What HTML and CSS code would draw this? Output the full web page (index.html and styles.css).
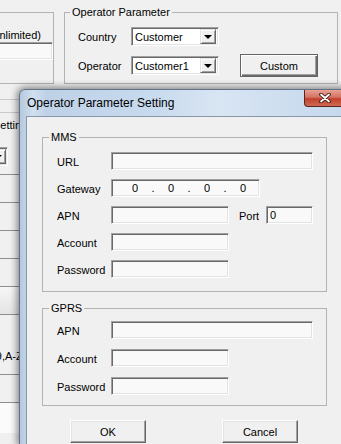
FILE: index.html
```html
<!DOCTYPE html>
<html lang="en">
<head>
  <meta charset="UTF-8" />
  <title>Operator Parameter Setting</title>
  <link rel="stylesheet" href="styles.css">
</head>
<body>

  <div class="app">
    <div class="top">
      <div class="group left-group">
        <div class="unl">(Unlimited)</div>
        <div class="field stub"></div>
      </div>

      <fieldset class="group op-group">
        <legend>Operator Parameter</legend>
        <div class="op-grid">
          <span class="lbl">Country</span>
          <div class="combo"><span>Customer</span><i class="drop"></i></div>
          <span class="lbl">Operator</span>
          <div class="combo"><span>Customer1</span><i class="drop"></i></div>
          <button class="btn custom">Custom</button>
        </div>
      </fieldset>
    </div>

    <div class="list">
      <div class="row r-head"></div>
      <div class="row r-thin"></div>
      <div class="row r-cap"><span class="cut-setting">Setting</span></div>
      <div class="row r-combo"><div class="combo mini"><i class="drop"></i></div></div>
      <div class="row r-std"></div>
      <div class="row r-std"></div>
      <div class="row r-std"></div>
      <div class="row r-std"></div>
      <div class="row r-std light"></div>
      <div class="row r-tall"><span class="cut-chars">0-9,A-Z</span></div>
      <div class="row r-std"></div>
      <div class="row r-last white"></div>
    </div>
  </div>

  <div class="dialog">
    <div class="titlebar">
      <span class="title">Operator Parameter Setting</span>
      <button class="close">
        <svg width="12" height="10" viewBox="0 0 12 10">
          <path d="M2 1.5 L10 8.5 M10 1.5 L2 8.5" stroke="#3b1512" stroke-width="3.6" stroke-linecap="round"/>
          <path d="M2 1.5 L10 8.5 M10 1.5 L2 8.5" stroke="#ffffff" stroke-width="1.8" stroke-linecap="round"/>
        </svg>
      </button>
    </div>

    <div class="client">
      <fieldset class="group mms">
        <legend>MMS</legend>
        <div class="form">
          <label>URL</label>
          <input class="field span-all" value="">

          <label>Gateway</label>
          <div class="field ip">
            <span>0</span><span>.</span><span>0</span><span>.</span><span>0</span><span>.</span><span>0</span>
          </div>

          <label>APN</label>
          <input class="field" value="">
          <label class="port-lbl">Port</label>
          <input class="field" value="0">

          <label>Account</label>
          <input class="field" value="">

          <label>Password</label>
          <input class="field" value="">
        </div>
      </fieldset>

      <fieldset class="group gprs">
        <legend>GPRS</legend>
        <div class="form">
          <label>APN</label>
          <input class="field span-all" value="">

          <label>Account</label>
          <input class="field" value="">

          <label>Password</label>
          <input class="field" value="">
        </div>
      </fieldset>

      <div class="actions">
        <button class="btn">OK</button>
        <button class="btn">Cancel</button>
      </div>
    </div>
  </div>

</body>
</html>
```

FILE: styles.css
```css
* {
  box-sizing: border-box;
}

body {
  margin: 0;
  width: 341px;
  height: 444px;
  overflow: hidden;
  position: relative;
  background: #f0f0f0;
  font-family: 'Liberation Sans', Arial, sans-serif;
  font-size: 11px;
  color: #000;
}

/* background window */

.top {
  display: flex;
  align-items: flex-start;
}

.group {
  border: 1px solid #b3b3b3;
  margin: 0;
  min-width: 0;
}

legend {
  padding: 0 2px;
  margin-left: -8px;
  line-height: 13px;
}

.left-group {
  flex: none;
  width: 154px;
  height: 72px;
  margin: 12px 0 0 -100px;
}

.unl {
  margin-top: 16px;
  line-height: 13px;
  text-align: right;
  padding-right: 12px;
}

.stub {
  width: 30px;
  height: 19px;
  margin: 15px 47px 0 auto;
}

.op-group {
  flex: none;
  width: 274px;
  margin: 6px 0 0 10px;
  padding: 8px 0 6px 13px;
}

.op-grid {
  display: grid;
  grid-template-columns: 53px 88px 99px;
  grid-template-rows: 19px 23px;
  row-gap: 8px;
  align-items: center;
}

.lbl {
  grid-column: 1;
}

.combo {
  display: flex;
  align-items: center;
  height: 19px;
  padding: 0 2px 0 3px;
  background: #fff;
  border: 1px solid;
  border-color: #a0a0a0 #fff #fff #a0a0a0;
  box-shadow: inset 1px 1px 0 #696969, inset -1px -1px 0 #e3e3e3;
}

.combo span {
  flex: 1;
  padding-top: 1px;
}

.drop {
  position: relative;
  width: 16px;
  height: 15px;
  background: #f0f0f0;
  border: 1px solid;
  border-color: #e3e3e3 #696969 #696969 #e3e3e3;
  box-shadow: inset 1px 1px 0 #fff, inset -1px -1px 0 #a0a0a0;
}

.drop::after {
  content: "";
  position: absolute;
  left: 3px;
  top: 5px;
  border-left: 4px solid transparent;
  border-right: 4px solid transparent;
  border-top: 4px solid #000;
}

.btn {
  font: inherit;
  color: #000;
  height: 23px;
  padding: 0;
  background: #f0f0f0;
  border: 1px solid;
  border-color: #fff #696969 #696969 #fff;
  box-shadow: inset -1px -1px 0 #a0a0a0, inset 1px 1px 0 #e3e3e3;
}

.custom {
  width: 78px;
  margin-left: 21px;
  border-color: #646464;
  box-shadow: inset 1px 1px 0 #fff, inset -1px -1px 0 #696969, inset -2px -2px 0 #a0a0a0;
}

.list {
  width: 60px;
  margin-top: 8px;
}

.row {
  border-bottom: 1px solid #8e8e8e;
  overflow: hidden;
  white-space: nowrap;
}

.r-head {
  height: 8px;
  border-bottom-color: #c8c8c8;
}

.r-thin {
  height: 13px;
  border-bottom-color: #c8c8c8;
}

.r-cap {
  height: 24px;
  border-bottom: none;
  padding-top: 6px;
}

.cut-setting {
  margin-left: -7px;
}

.r-combo {
  height: 38px;
  padding-top: 10px;
}

.combo.mini {
  width: 30px;
  margin-left: -22px;
  padding: 0 1px 0 0;
  justify-content: flex-end;
}

.r-std {
  height: 28px;
}

.r-tall {
  height: 60px;
  padding-top: 35px;
}

.r-last {
  height: 30px;
  border-bottom: none;
}

.cut-chars {
  margin-left: -14px;
}

.light {
  background: linear-gradient(#f6f6f6, #e4e4e4);
}

.white {
  background: #fbfbfb;
}

/* dialog window */

.dialog {
  position: absolute;
  left: 19px;
  top: 89px;
  width: 334px;
  height: 355px;
  padding: 0 6px;
  border: 1px solid #5f728a;
  border-bottom: none;
  border-radius: 6px 6px 0 0;
  background: linear-gradient(90deg, #b4c8de, #d2e0ef 4%, #bed1e7 8%, #c8daee 40%, #d8e5f3 60%, #c4d7ec);
  box-shadow: 0 0 7px 2px rgba(0, 0, 0, 0.45);
}

.titlebar {
  display: flex;
  justify-content: space-between;
  height: 26px;
}

.title {
  align-self: center;
  padding-left: 1px;
  font-size: 12px;
  color: #000;
}

.close {
  width: 42px;
  height: 17px;
  padding: 0;
  border: 1px solid #5a2420;
  border-top: none;
  border-radius: 0 0 4px 4px;
  background: linear-gradient(#e8a294, #d47262 45%, #c1402c 55%, #cf6a52);
  display: flex;
  align-items: center;
  justify-content: center;
}

.client {
  height: 329px;
  padding-left: 15px;
  background: #f0f0f0;
  border: 1px solid #8797ab;
  border-bottom: none;
}

.mms,
.gprs {
  width: 285px;
  padding: 8px 0 13px 14px;
}

.mms {
  margin-top: 14px;
}

.gprs {
  margin-top: 10px;
  padding-top: 6px;
  padding-bottom: 10px;
}

.form {
  display: grid;
  grid-template-columns: 54px 118px 10px 27px 47px;
  grid-auto-rows: 18px;
  row-gap: 9px;
  align-items: center;
}

.gprs .form {
  row-gap: 10px;
}

.form label {
  grid-column: 1;
  padding-top: 1px;
}

.form .port-lbl {
  grid-column: 4;
}

.field {
  height: 18px;
  width: 100%;
  margin: 0;
  padding: 0 3px;
  font: inherit;
  color: #000;
  background: #f9f9f9;
  border: 1px solid;
  border-color: #a0a0a0 #fff #fff #a0a0a0;
  box-shadow: inset 1px 1px 0 #696969, inset -1px -1px 0 #e3e3e3;
  outline: none;
}

.span-all {
  grid-column: 2 / 6;
}

.ip {
  grid-column: 2 / 6;
  width: 149px;
  display: flex;
  align-items: center;
  padding-left: 14px;
}

.ip span {
  width: 18px;
  text-align: center;
}

.actions {
  display: flex;
  gap: 76px;
  margin-top: 14px;
  padding-left: 28px;
}

.actions .btn {
  width: 76px;
}
```
